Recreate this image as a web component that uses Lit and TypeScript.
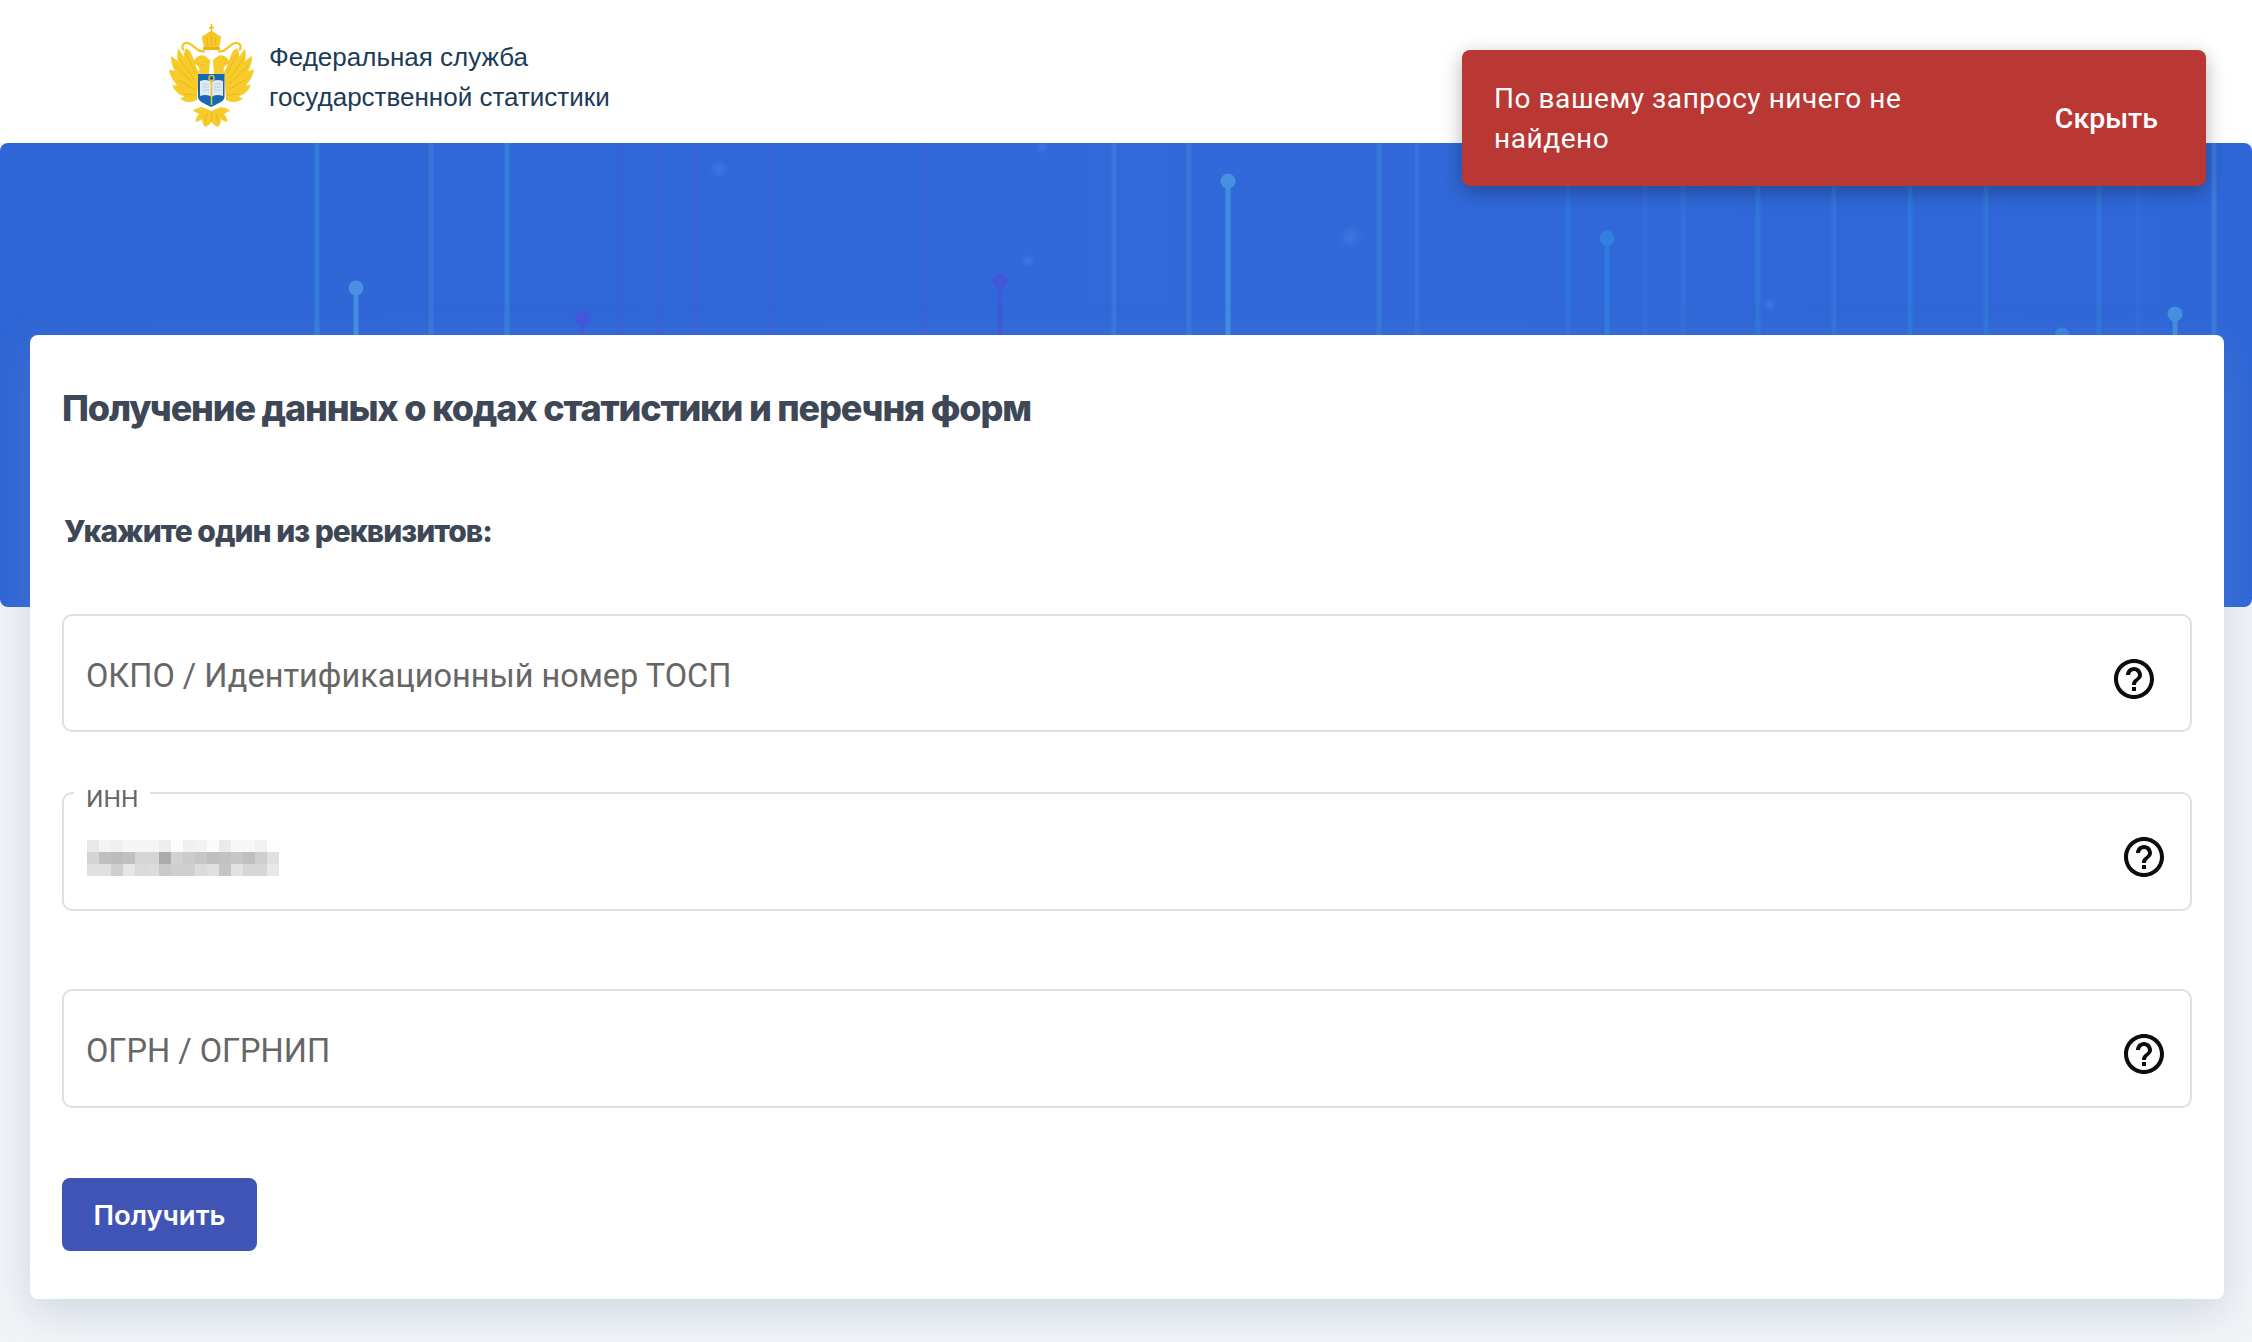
import { LitElement, html, css, svg } from "lit";
import { customElement } from "lit/decorators.js";

// vertical strokes of the banner picture: x, colour (banner coordinates)
const LINES: [number, string][] = [
  [317, "#3a82dc"], [431, "#3a7cdc"], [507, "#3a82dc"], [621, "#3a62d8"],
  [660, "#3a62d8"], [697, "#3c60da"], [772, "#3c60da"], [925, "#3a62d8"],
  [1114, "#3a7cdc"], [1189, "#3a7cdc"], [1379, "#3a7cdc"], [1417, "#3776dc"],
  [1568, "#2f76da"], [1645, "#356eda"], [1683, "#3572da"], [1758, "#3478dc"],
  [1834, "#3478dc"], [1910, "#2f7cdc"], [1986, "#3478dc"], [2099, "#3478dc"],
  [2138, "#356eda"], [2214, "#4080dc"],
];

const PINS: [number, number, string][] = [
  [356, 145, "#4a90e0"], [582, 175, "#4058dc"], [1000, 138, "#4058d8"],
  [1228, 38, "#4590e0"], [1607, 95, "#2f80e0"], [2175, 171, "#4590e0"], [2062, 192, "#3a80e0"],
];

const GLOWS: [number, number, number][] = [
  [719, 26, 10], [1042, 4, 7], [1028, 118, 7], [1351, 94, 12], [1770, 162, 7],
];

// the pixelated value of the INN field
const BLUR = [
  ["e8", "f4", "f0", "f6", "f5", "f5", "ee", "fc", "f0", "f2", "fb", "ea", "f7", "f7", "f1", "fd"],
  ["d4", "bf", "bc", "c0", "d5", "d5", "ab", "d2", "cc", "c6", "bf", "c2", "c6", "bf", "ce", "e0"],
  ["e0", "e0", "cf", "e6", "da", "dc", "c9", "cf", "cf", "db", "e0", "c4", "e2", "d6", "d6", "e8"],
];

const helpIcon = html`<svg class="help" viewBox="0 0 24 24" fill="#0c0c0c">
  <path
    d="M11 18h2v-2h-2v2zm1-16C6.48 2 2 6.48 2 12s4.48 10 10 10 10-4.48 10-10S17.52 2 12 2zm0 18c-4.41 0-8-3.59-8-8s3.59-8 8-8 8 3.59 8 8-3.59 8-8 8zm0-14c-2.21 0-4 1.79-4 4h2c0-1.1.9-2 2-2s2 .9 2 2c0 2-3 1.75-3 5h2c0-2.25 3-2.5 3-5 0-2.21-1.79-4-4-4z"
  />
</svg>`;

const wing = svg`
  <path fill="#f6cb2a" d="M30 48 C26 42 25 34 21 27 C20 25 18 26 17 24 C15 27 15 30 15 33 C12 29 11 26 9 25 C8 29 8 33 9 37 C6 35 4 33 2 32 C2 38 3 42 6 47 C4 47 2 46 0 45 C1 52 4 57 8 61 C6 62 4 61 3 60 C5 67 10 71 15 72 C14 74 13 74 11 74 C15 79 22 79 28 76 Z"/>
  <path fill="none" stroke="#e6b31a" stroke-width="0.8" d="M27 50 L17 30 M25 55 L10 34 M25 60 L6 42 M26 66 L9 56 M27 71 L15 70"/>
`;

const emblem = html`<svg class="emblem" viewBox="0 0 85 103">
  <g>${wing}</g>
  <g transform="translate(85 0) scale(-1 1)">${wing}</g>
  <!-- crown -->
  <rect x="41.7" y="0" width="1.6" height="8" fill="#f0b818" />
  <rect x="40" y="3" width="5" height="1.4" fill="#f0b818" />
  <path fill="#f6c92a" d="M42.5 7 C47 8 49 12 52 12 C52 16 51 20 50 23 L35 23 C34 20 33 16 33 12 C36 12 38 8 42.5 7 Z" />
  <rect x="34" y="23" width="17" height="3" rx="1" fill="#eab415" />
  <path fill="none" stroke="#e8b014" stroke-width="0.8" d="M38 13 L39 22 M42.5 10 V22 M47 13 L46 22" />
  <!-- ribbons -->
  <path fill="none" stroke="#f4c824" stroke-width="2.2" d="M36 27 C28 30 24 18 17 19 C12 20 13 25 15 26 M49 27 C57 30 61 18 68 19 C73 20 72 25 70 26" />
  <!-- heads and necks -->
  <path fill="#f6cb2a" d="M25 37 C27 32 33 30 36 32 L41 36 L40 50 L30 50 C31 44 30 41 25 40 Z" />
  <path fill="#f6cb2a" d="M60 37 C58 32 52 30 49 32 L44 36 L45 50 L55 50 C54 44 55 41 60 40 Z" />
  <!-- shield -->
  <path fill="#1668b4" d="M29 50 H55.5 V73 C55.5 78 47 80 42.3 83 C37 80 29 78 29 73 Z" />
  <path fill="#dfeaf4" d="M31 57 C36 55 40 56 42.5 58 C45 56 49 55 54 57 V72 C49 70 45 71 42.5 73 C40 71 36 70 31 72 Z" />
  <path fill="none" stroke="#a9c4dc" stroke-width="0.8" d="M33 60 H40 M33 63 H40 M33 66 H40 M45 60 H52 M45 63 H52 M45 66 H52" />
  <path fill="none" stroke="#f2c21c" stroke-width="1.5" d="M42.5 56 V81" />
  <circle cx="42.5" cy="54" r="2.6" fill="none" stroke="#f2c21c" stroke-width="1.3" />
  <!-- tail and legs -->
  <path fill="#f6cb2a" d="M33 83 C30 84 26 84 24 87 C27 88 28 89 30 90 C28 93 26 95 27 98 C30 97 32 96 33 95 C33 98 34 101 36 103 C39 102 41 100 42.5 98 C44 100 46 102 49 103 C51 101 52 98 52 95 C53 96 55 97 58 98 C59 95 57 93 55 90 C57 89 58 88 61 87 C59 84 55 84 52 83 L42.5 87 Z" />
  <path fill="none" stroke="#e6b31a" stroke-width="0.7" d="M42.5 88 V98 M38 89 L36 100 M47 89 L49 100" />
</svg>`;

@customElement("app-root")
export class AppRoot extends LitElement {
  static styles = css`
    :host {
      display: block;
      position: relative;
      height: 1342px;
      overflow: hidden;
      background: #f1f4f7;
      font-family: Roboto, sans-serif;
    }

    .header {
      height: 143px;
      background: #fff;
      display: flex;
      align-items: center;
      gap: 15px;
      padding-left: 169px;
    }

    .emblem {
      width: 85px;
      height: 103px;
      margin-top: 8px;
      flex: none;
    }

    .org {
      font-family: "Liberation Sans", sans-serif;
      font-size: 26px;
      line-height: 40px;
      color: #1c3b57;
      margin-top: 11px;
    }

    .banner {
      height: 464px;
      border-radius: 8px;
      background: linear-gradient(90deg, #2f66d6, #3169da 50%, #2f67d8);
      overflow: hidden;
    }

    .banner svg {
      display: block;
      width: 100%;
      height: 100%;
    }

    .card {
      position: relative;
      margin: -272px 28px 0 30px;
      height: 964px;
      box-sizing: border-box;
      padding: 51px 32px 0;
      background: #fff;
      border-radius: 8px;
      box-shadow: 0 12px 40px rgba(120, 140, 170, 0.28);
    }

    .title {
      margin: 0;
      font-family: Inter, sans-serif;
      font-size: 36px;
      line-height: 44px;
      font-weight: 800;
      letter-spacing: -1.18px;
      color: #3d4756;
    }

    .hint {
      margin: 81px 0 63px 2px;
      font-family: Inter, sans-serif;
      font-size: 30px;
      line-height: 40px;
      font-weight: 800;
      letter-spacing: -1px;
      color: #3d4756;
    }

    .field {
      position: relative;
      box-sizing: border-box;
      height: 119px;
      border: 2px solid #e0e0e0;
      border-radius: 10px;
      display: flex;
      align-items: center;
      justify-content: space-between;
      padding: 0 22px 0 22px;
      font-size: 32.5px;
      color: #666;
    }

    .field + .field {
      margin-top: 60px;
    }

    .field.last {
      margin-top: 78px;
    }

    .field.wide {
      height: 118px;
      padding-right: 32px;
    }

    .value {
      margin-top: 5px;
    }

    .notch {
      position: absolute;
      left: 10px;
      top: -7px;
      padding: 0 12px;
      background: #fff;
      font-size: 24.5px;
      line-height: 24px;
      color: #666;
    }

    .blur {
      display: grid;
      grid-template-columns: repeat(16, 12px);
      grid-auto-rows: 12px;
      margin: 13px 0 0 1px;
    }

    .help {
      width: 48px;
      height: 48px;
      margin-top: 11px;
      flex: none;
    }

    .submit {
      display: block;
      margin-top: 70px;
      width: 195px;
      height: 73px;
      padding: 0;
      border: 0;
      border-radius: 8px;
      background: #3f54b4;
      color: #fff;
      font-family: Inter, sans-serif;
      font-size: 27.5px;
      font-weight: 600;
    }

    .toast {
      position: absolute;
      left: 1462px;
      top: 50px;
      width: 744px;
      height: 136px;
      box-sizing: border-box;
      padding: 0 48px 0 32px;
      display: flex;
      align-items: center;
      justify-content: space-between;
      background: #b93834;
      border-radius: 8px;
      box-shadow: 0 6px 20px rgba(0, 0, 0, 0.3);
      color: #fff;
    }

    .toast p {
      margin: 2px 0 0;
      width: 440px;
      font-size: 28px;
      line-height: 40px;
      letter-spacing: 0.55px;
    }

    .toast span {
      font-size: 28.5px;
      font-weight: 500;
    }
  `;

  private renderBanner() {
    return html`<div class="banner">
      <svg viewBox="0 0 2252 464">
        <defs>
          <radialGradient id="glow">
            <stop offset="0" stop-color="#5f9af0" stop-opacity="0.3" />
            <stop offset="1" stop-color="#5f9af0" stop-opacity="0" />
          </radialGradient>
        </defs>
        ${LINES.map(([x, c]) => svg`<rect x=${x - 2.5} y="0" width="5" height="464" fill=${c} opacity="0.75"></rect>`)}
        ${PINS.map(
          ([x, y, c]) => svg`<rect x=${x - 2.5} y=${y} width="5" height="464" fill=${c} opacity="0.9"></rect>
            <circle cx=${x} cy=${y} r="7.5" fill=${c}></circle>`
        )}
        ${GLOWS.map(([x, y, r]) => svg`<circle cx=${x} cy=${y} r=${r} fill="url(#glow)"></circle>`)}
      </svg>
    </div>`;
  }

  render() {
    return html`
      <div class="header">
        ${emblem}
        <div class="org">Федеральная служба<br />государственной статистики</div>
      </div>
      ${this.renderBanner()}
      <main class="card">
        <h1 class="title">Получение данных о кодах статистики и перечня форм</h1>
        <p class="hint">Укажите один из реквизитов:</p>
        <div class="field wide"><span class="value">ОКПО / Идентификационный номер ТОСП</span> ${helpIcon}</div>
        <div class="field">
          <span class="notch">ИНН</span>
          <div class="blur">
            ${BLUR.flat().map((v) => html`<i style="background:#${v}${v}${v}"></i>`)}
          </div>
          ${helpIcon}
        </div>
        <div class="field last"><span class="value">ОГРН / ОГРНИП</span> ${helpIcon}</div>
        <button class="submit">Получить</button>
      </main>
      <div class="toast">
        <p>По вашему запросу ничего не найдено</p>
        <span>Скрыть</span>
      </div>
    `;
  }
}
